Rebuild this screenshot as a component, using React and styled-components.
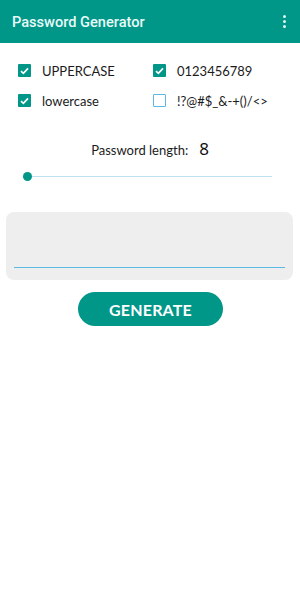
import styled, { createGlobalStyle } from "styled-components";

const Global = createGlobalStyle`
    body {
        margin: 0;
        background: #ffffff;
        font-family: Lato, "Noto Sans", sans-serif;
    }
`;

const Screen = styled.div`
    width: 300px;
    min-height: 608px;
    background: #ffffff;
`;

const AppBar = styled.div`
    height: 43px;
    background-color: #009688;
    display: flex;
    align-items: center;
    justify-content: space-between;
    padding: 0 10px 0 12px;
    box-sizing: border-box;
`;

const Title = styled.div`
    color: #e8fbf8;
    font-family: Roboto, "Noto Sans", sans-serif;
    font-weight: 500;
    font-size: 14.6px;
`;

const Kebab = styled.div`
    display: flex;
    flex-direction: column;
    gap: 2px;
    padding: 2px 4px;
`;

const Dot = styled.span`
    width: 3px;
    height: 3px;
    border-radius: 50%;
    background: #e0f7f4;
`;

const Options = styled.div`
    display: grid;
    grid-template-columns: 135px 1fr;
    row-gap: 17px;
    padding: 21px 0 0 18px;
`;

const Option = styled.label`
    display: flex;
    align-items: center;
    gap: 11px;
    font-size: 13px;
    color: #1b1b1b;
    height: 13px;
`;

const Box = styled.span`
    width: 13px;
    height: 13px;
    box-sizing: border-box;
    border-radius: 1px;
    display: flex;
    align-items: center;
    justify-content: center;
    background: ${(p) => (p.checked ? "#009688" : "#ffffff")};
    border: ${(p) => (p.checked ? "none" : "1.5px solid #5cb8e0")};
`;

const LengthRow = styled.div`
    display: flex;
    justify-content: center;
    align-items: baseline;
    gap: 11px;
    margin-top: 30px;
`;

const LengthLabel = styled.span`
    font-size: 13px;
    color: #1b1b1b;
`;

const LengthValue = styled.span`
    font-size: 17px;
    color: #111;
    font-family: "Noto Sans", sans-serif;
`;

const Slider = styled.div`
    position: relative;
    margin: 11px 28px 0 27px;
    height: 10px;
    display: flex;
    align-items: center;
`;

const Track = styled.div`
    flex: 1;
    height: 1px;
    background: #bfe2f2;
`;

const Thumb = styled.span`
    position: absolute;
    left: -4.5px;
    top: 0.5px;
    width: 9px;
    height: 9px;
    border-radius: 50%;
    background: #009688;
`;

const Output = styled.div`
    margin: 31px 7px 0 6px;
    height: 68px;
    background: #eeeeee;
    border-radius: 8px;
    padding: 0 8px;
    display: flex;
    align-items: flex-end;
`;

const Field = styled.div`
    flex: 1;
    height: 1px;
    background: #5ab9e2;
    margin-bottom: 12px;
`;

const ButtonRow = styled.div`
    display: flex;
    justify-content: center;
    margin-top: 12px;
`;

const Generate = styled.button`
    width: 145px;
    height: 34px;
    border: none;
    border-radius: 17px;
    background: #009688;
    color: #ffffff;
    font-family: Lato, "Noto Sans", sans-serif;
    font-weight: 700;
    font-size: 16px;
    letter-spacing: 0.2px;
    margin-left: 1px;
`;

const Check = () => (
    <svg width="9" height="8" viewBox="0 0 9 8">
        <path d="M1 4.2 L3.4 6.4 L8 1.4" fill="none" stroke="#ffffff" strokeWidth="1.7" />
    </svg>
);

const options = [
    { label: "UPPERCASE", checked: true },
    { label: "0123456789", checked: true },
    { label: "lowercase", checked: true },
    { label: "!?@#$_&-+()/<>", checked: false },
];

const App = () => {
    return (
        <Screen>
            <Global />
            <AppBar>
                <Title>Password Generator</Title>
                <Kebab>
                    <Dot />
                    <Dot />
                    <Dot />
                </Kebab>
            </AppBar>
            <Options>
                {options.map((o) => (
                    <Option key={o.label}>
                        <Box checked={o.checked}>{o.checked && <Check />}</Box>
                        {o.label}
                    </Option>
                ))}
            </Options>
            <LengthRow>
                <LengthLabel>Password length:</LengthLabel>
                <LengthValue>8</LengthValue>
            </LengthRow>
            <Slider>
                <Track />
                <Thumb />
            </Slider>
            <Output>
                <Field />
            </Output>
            <ButtonRow>
                <Generate>GENERATE</Generate>
            </ButtonRow>
        </Screen>
    );
};

export default App;
